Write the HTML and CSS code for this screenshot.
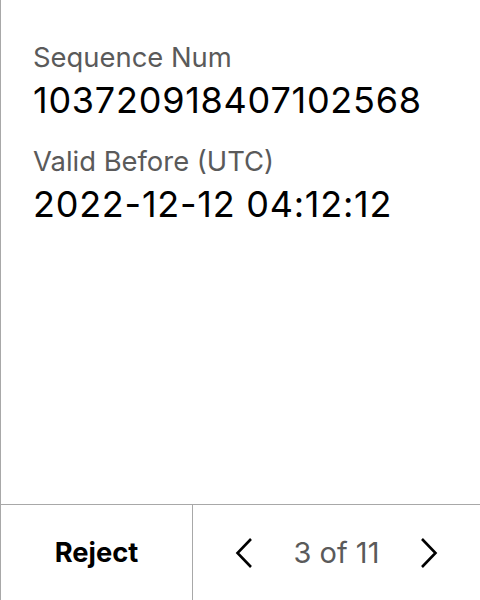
FILE: index.html
```html
<!DOCTYPE html>
<html>
<head>
<meta charset="utf-8">
<link rel="stylesheet" href="styles.css">
</head>
<body>
<div class="screen">
  <div class="content">
    <div class="field">
      <div class="label">Sequence Num</div>
      <div class="value">103720918407102568</div>
    </div>
    <div class="field">
      <div class="label">Valid Before (UTC)</div>
      <div class="value">2022-12-12 04:12:12</div>
    </div>
  </div>
  <div class="footer">
    <div class="reject">Reject</div>
    <div class="pager">
      <svg class="chev" width="18" height="32" viewBox="0 0 18 32"><path d="M16 2 L2.5 16 L16 30" fill="none" stroke="#000" stroke-width="2.6"/></svg>
      <span class="count">3 of 11</span>
      <svg class="chev" width="18" height="32" viewBox="0 0 18 32"><path d="M2 2 L15.5 16 L2 30" fill="none" stroke="#000" stroke-width="2.6"/></svg>
    </div>
  </div>
</div>
</body>
</html>
```
FILE: styles.css
```css
html, body {
  margin: 0;
  padding: 0;
  background: #fff;
}
.screen {
  width: 480px;
  height: 600px;
  box-sizing: border-box;
  border-left: 1px solid #a8a8a8;
  display: flex;
  flex-direction: column;
  font-family: Inter, "Noto Sans", sans-serif;
}
.content {
  flex: 1;
  padding: 40px 0 0 32px;
  display: flex;
  flex-direction: column;
  gap: 20px;
}
.label {
  font-size: 27.4px;
  color: #5a5a5a;
  line-height: 34px;
}
.value {
  font-size: 36px;
  letter-spacing: 0.75px;
  color: #000;
  line-height: 48px;
  padding-top: 2px;
}
.footer {
  height: 96px;
  box-sizing: border-box;
  border-top: 1px solid #a8a8a8;
  display: flex;
}
.reject {
  width: 192px;
  box-sizing: border-box;
  border-right: 1px solid #a8a8a8;
  display: flex;
  align-items: center;
  justify-content: center;
  font-weight: 700;
  font-size: 27.3px;
  color: #000;
}
.pager {
  flex: 1;
  display: flex;
  align-items: center;
  justify-content: center;
  gap: 41px;
}
.count {
  font-size: 29px;
  color: #5a5a5a;
}
```
